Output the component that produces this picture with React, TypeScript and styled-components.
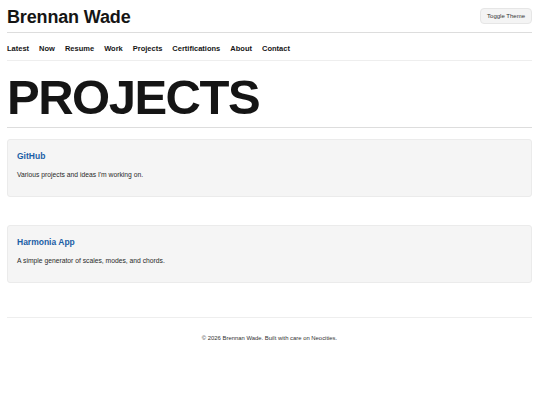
import React from "react";
import styled, { createGlobalStyle } from "styled-components";

const Global = createGlobalStyle`
  html, body { margin: 0; padding: 0; background: #ffffff; }
  body { font-family: "Liberation Sans", Arial, Helvetica, sans-serif; color: #111111; }
`;

const Page = styled.div`
  padding: 0 8px 0 7px;
`;

const Header = styled.header`
  display: flex;
  justify-content: space-between;
  align-items: flex-start;
  height: 25px;
  padding-top: 7px;
  border-bottom: 1px solid #dddddd;
`;

const SiteTitle = styled.div`
  font-size: 18px;
  line-height: 21px;
  font-weight: 700;
  letter-spacing: -0.15px;
  color: #151515;
`;

const ToggleButton = styled.button`
  margin-top: 1px;
  height: 16px;
  padding: 0 6px;
  font-family: "Liberation Sans", Arial, sans-serif;
  font-size: 6px;
  color: #333333;
  background: #f4f4f4;
  border: 1px solid #e6e6e6;
  border-radius: 4px;
`;

const Nav = styled.nav`
  display: flex;
  gap: 10px;
  padding: 11px 0 7px;
  border-bottom: 1px solid #eeeeee;
`;

const NavLink = styled.a`
  font-size: 7.5px;
  line-height: 9px;
  font-weight: 700;
  color: #151515;
  text-decoration: none;
`;

const PageTitle = styled.h1`
  margin: 12px 0 0;
  padding-bottom: 5px;
  font-size: 49px;
  line-height: 49px;
  font-weight: 700;
  letter-spacing: -1.5px;
  color: #151515;
  border-bottom: 1px solid #dddddd;
`;

const CardList = styled.div`
  display: flex;
  flex-direction: column;
  gap: 28px;
  margin-top: 11px;
`;

const Card = styled.div`
  background: #f5f5f5;
  border: 1px solid #ebebeb;
  border-radius: 3px;
  padding: 11px 9px 9px;
  height: 36px;
`;

const CardTitle = styled.a`
  display: block;
  font-size: 8.5px;
  line-height: 10px;
  font-weight: 700;
  color: #1b5ea6;
  text-decoration: none;
  margin-bottom: 10px;
`;

const CardText = styled.p`
  margin: 0;
  font-size: 6.75px;
  line-height: 8px;
  color: #2a2a2a;
`;

const Footer = styled.footer`
  margin-top: 34px;
  border-top: 1px solid #eeeeee;
  padding-top: 16px;
  text-align: center;
  font-size: 5.9px;
  line-height: 8px;
  color: #333333;
`;

const links = ["Latest", "Now", "Resume", "Work", "Projects", "Certifications", "About", "Contact"];

const projects = [
  { title: "GitHub", text: "Various projects and ideas I'm working on." },
  { title: "Harmonia App", text: "A simple generator of scales, modes, and chords." },
];

export default function App() {
  return (
    <>
      <Global />
      <Page>
        <Header>
          <SiteTitle>Brennan Wade</SiteTitle>
          <ToggleButton>Toggle Theme</ToggleButton>
        </Header>
        <Nav>
          {links.map((l) => (
            <NavLink key={l} href="#">{l}</NavLink>
          ))}
        </Nav>
        <PageTitle>PROJECTS</PageTitle>
        <CardList>
          {projects.map((p) => (
            <Card key={p.title}>
              <CardTitle href="#">{p.title}</CardTitle>
              <CardText>{p.text}</CardText>
            </Card>
          ))}
        </CardList>
        <Footer>© 2026 Brennan Wade. Built with care on Neocities.</Footer>
      </Page>
    </>
  );
}
